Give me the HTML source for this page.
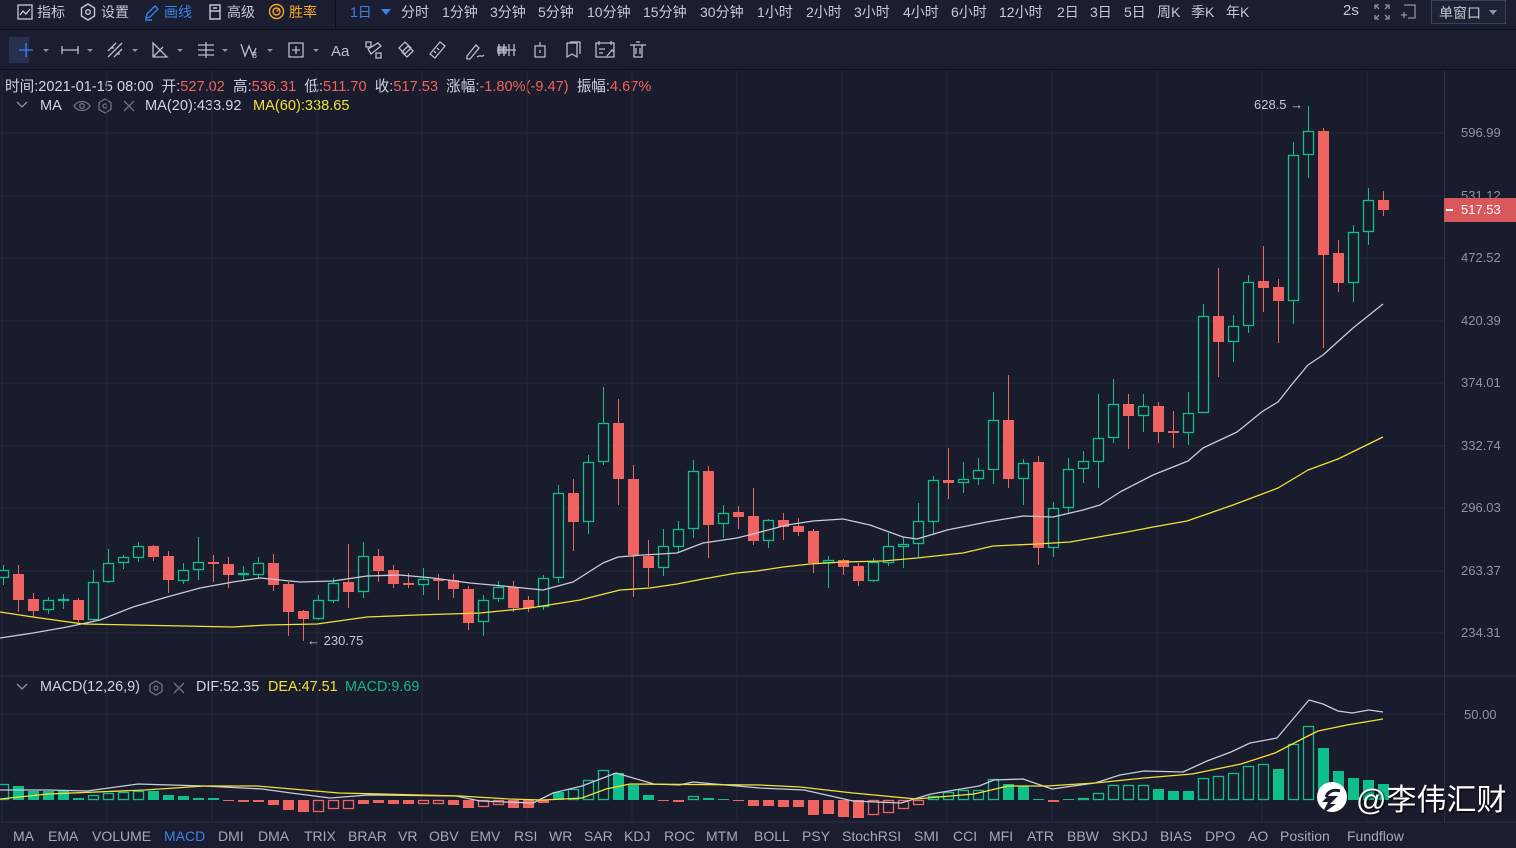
<!DOCTYPE html>
<html><head><meta charset="utf-8">
<style>
*{margin:0;padding:0;box-sizing:border-box}
body{width:1516px;height:848px;overflow:hidden;background:#191c2d;font-family:"Liberation Sans","Noto Sans CJK SC",sans-serif;color:#c5c9d6;position:relative}
.a{position:absolute;white-space:nowrap}
.top{font-size:14px;top:2px;color:#c5c9d6}
.tab{font-size:14px;top:828px;color:#a3a8bb}
.ax{font-size:13px;color:#8d92a6;left:1461px}
</style></head><body>
<div class="a" style="left:0;top:0;width:1516px;height:30px;background:#1b1e30;border-bottom:1px solid #0e1019"></div>
<div class="a" style="left:0;top:31px;width:1516px;height:39px;background:#1b1e30;border-bottom:1px solid #0e1019"></div>
<div class="a" style="left:335px;top:0;width:1px;height:30px;background:#0e1019"></div>

<!-- top bar -->
<svg class="a" style="left:17px;top:4px" width="16" height="16" viewBox="0 0 16 16" fill="none" stroke="#c5c9d6" stroke-width="1.3"><rect x="1" y="1" width="14" height="14"/><path d="M3 11l3-4 3 3 4-5"/></svg>
<span class="a top" style="left:37px">指标</span>
<svg class="a" style="left:80px;top:3px" width="16" height="18" viewBox="0 0 16 18" fill="none" stroke="#c5c9d6" stroke-width="1.4"><path d="M8 1l6.5 4v8L8 17 1.5 13V5z"/><circle cx="8" cy="9" r="2.3"/></svg>
<span class="a top" style="left:101px">设置</span>
<svg class="a" style="left:144px;top:3px" width="16" height="18" viewBox="0 0 16 18" fill="none" stroke="#3d82e6" stroke-width="1.4"><path d="M2 15l1-4 8-8 3 3-8 8zM1 17h7"/></svg>
<span class="a top" style="left:164px;color:#3d82e6">画线</span>
<svg class="a" style="left:207px;top:4px" width="16" height="16" viewBox="0 0 16 16" fill="none" stroke="#c5c9d6" stroke-width="1.4"><path d="M3 1h10v14H3zM3 7h10M6 4h4"/></svg>
<span class="a top" style="left:227px">高级</span>
<svg class="a" style="left:268px;top:3px" width="17" height="17" viewBox="0 0 17 17" fill="none" stroke="#f5a623" stroke-width="1.4"><circle cx="8.5" cy="8.5" r="7"/><circle cx="8.5" cy="8.5" r="3.5"/><path d="M8.5 8.5l3-3"/></svg>
<span class="a top" style="left:289px;color:#f5a623">胜率</span>
<span class="a top" style="left:350px;color:#3d82e6">1日</span>
<div class="a" style="left:381px;top:9px;border:5px solid transparent;border-top:6px solid #3d82e6"></div>
<span class="a top" style="left:401px">分时</span>
<span class="a top" style="left:442px">1分钟</span>
<span class="a top" style="left:490px">3分钟</span>
<span class="a top" style="left:538px">5分钟</span>
<span class="a top" style="left:587px">10分钟</span>
<span class="a top" style="left:643px">15分钟</span>
<span class="a top" style="left:700px">30分钟</span>
<span class="a top" style="left:757px">1小时</span>
<span class="a top" style="left:806px">2小时</span>
<span class="a top" style="left:854px">3小时</span>
<span class="a top" style="left:903px">4小时</span>
<span class="a top" style="left:951px">6小时</span>
<span class="a top" style="left:999px">12小时</span>
<span class="a top" style="left:1057px">2日</span>
<span class="a top" style="left:1090px">3日</span>
<span class="a top" style="left:1124px">5日</span>
<span class="a top" style="left:1157px">周K</span>
<span class="a top" style="left:1191px">季K</span>
<span class="a top" style="left:1226px">年K</span>
<span class="a top" style="left:1343px;font-size:15px">2s</span>
<svg class="a" style="left:1374px;top:4px" width="16" height="16" viewBox="0 0 16 16" fill="none" stroke="#8d92a6" stroke-width="1.3"><path d="M1 5V1h4M11 1h4v4M15 11v4h-4M5 15H1v-4M2 2l3 3M14 2l-3 3M14 14l-3-3M2 14l3-3"/></svg>
<svg class="a" style="left:1400px;top:3px" width="17" height="17" viewBox="0 0 17 17" fill="none" stroke="#8d92a6" stroke-width="1.3"><path d="M4 2h11v13H8M1 12h6M4 9v6"/></svg>
<div class="a" style="left:1431px;top:0;width:75px;height:24px;border:1px solid #3a4060;background:#1e2235"></div>
<span class="a top" style="left:1439px;top:3px">单窗口</span>
<div class="a" style="left:1489px;top:10px;border:4px solid transparent;border-top:5px solid #8d92a6"></div>

<!-- tool row -->
<div class="a" style="left:9px;top:37px;width:20px;height:26px;background:#283050"></div>
<svg class="a" style="left:0;top:36px" width="660" height="28" viewBox="0 0 660 28" fill="none" stroke="#b9bdcc" stroke-width="1.3">
<path d="M19 14h14M26 7v14" stroke="#3d82e6"/>
<path d="M43 13l3 3 3-3z" fill="#8d92a6" stroke="none"/>
<path d="M62 14h16M62 10v8M78 10v8"/><path d="M87 13l3 3 3-3z" fill="#8d92a6" stroke="none"/>
<path d="M108 21l14-14M108 15l8-8M114 21l8-8M110 12h4M116 18h4"/><path d="M132 13l3 3 3-3z" fill="#8d92a6" stroke="none"/>
<path d="M153 7v14h14zM153 21l10-10"/><path d="M177 13l3 3 3-3z" fill="#8d92a6" stroke="none"/>
<path d="M198 9h16M198 14h16M198 19h16M206 6v16"/><path d="M222 13l3 3 3-3z" fill="#8d92a6" stroke="none"/>
<path d="M241 8l4 12 4-10 4 10 3-8"/><text x="252" y="22" font-size="9" fill="#b9bdcc" stroke="none" font-family="Liberation Sans">3</text><path d="M267 13l3 3 3-3z" fill="#8d92a6" stroke="none"/>
<path d="M289 7h14v14h-14zM296 10v8M292 14h8"/><path d="M313 13l3 3 3-3z" fill="#8d92a6" stroke="none"/>
<text x="331" y="20" font-size="15" fill="#b9bdcc" stroke="none" font-family="Liberation Sans">Aa</text>
<path d="M366 6h5v5h-5zM376 17h5v5h-5zM368 13l10-6 3 3-10 8z"/>
<path d="M399 12l6-6 6 6-6 6zM402 16l6-6 5 5-6 6z"/>
<path d="M430 18l10-12 5 4-10 12zM434 15l2 2M437 12l2 2"/>
<path d="M467 20l9-11 3 3-9 11h-3zM477 21c3-3 5 1 7-2"/>
<path d="M499 8v12M504 8v12M509 8v12M514 8v12M497 14h19M498 11h3v6h-3zM503 11h3v6h-3z"/>
<path d="M535 10h10v11h-10zM540 6v4M540 14v3"/>
<path d="M567 7h10v14l-5-3-5 3zM570 6h10v12"/>
<path d="M596 7h18v14h-18zM599 5v4M611 5v4M599 13h6M599 17h4M607 20l5-6 2 2"/>
<path d="M630 9h16M634 9v12h8V9M636 6h4M636 12v6M640 12v6"/>
</svg>

<!-- info lines -->
<div class="a" style="left:5px;top:75px;font-size:14.6px;color:#d0d3de">时间:2021-01-15 08:00&nbsp; 开:<span style="color:#f0605c">527.02</span>&nbsp; 高:<span style="color:#f0605c">536.31</span>&nbsp; 低:<span style="color:#f0605c">511.70</span>&nbsp; 收:<span style="color:#f0605c">517.53</span>&nbsp; 涨幅:<span style="color:#f0605c">-1.80%(-9.47)</span>&nbsp; 振幅:<span style="color:#f0605c">4.67%</span></div>
<svg class="a" style="left:16px;top:100px" width="12" height="10" viewBox="0 0 12 10" fill="none" stroke="#8d92a6" stroke-width="1.3"><path d="M1 2l5 5 5-5"/></svg>
<span class="a" style="left:40px;top:98px;font-size:14.6px;color:#d0d3de">MA</span>
<svg class="a" style="left:73px;top:98px" width="65" height="16" viewBox="0 0 65 16" fill="none" stroke="#6e7388" stroke-width="1.3"><path d="M1 8c4-6 12-6 16 0-4 6-12 6-16 0z"/><circle cx="9" cy="8" r="2.3"/><path d="M32 1l6 3.5v7L32 15l-6-3.5v-7z"/><circle cx="32" cy="8" r="2"/><path d="M51 3l10 10M61 3L51 13"/></svg>
<span class="a" style="left:145px;top:98px;font-size:14.6px;color:#d0d3de">MA(20):433.92</span>
<span class="a" style="left:253px;top:98px;font-size:14.6px;color:#f2e234">MA(60):338.65</span>

<!-- chart svg -->
<svg id="ch" class="a" style="left:0;top:0" width="1516" height="848"></svg>

<!-- axis labels -->
<span class="a ax" style="top:125px">596.99</span>
<span class="a ax" style="top:188px">531.12</span>
<span class="a ax" style="top:250px">472.52</span>
<span class="a ax" style="top:313px">420.39</span>
<span class="a ax" style="top:375px">374.01</span>
<span class="a ax" style="top:438px">332.74</span>
<span class="a ax" style="top:500px">296.03</span>
<span class="a ax" style="top:563px">263.37</span>
<span class="a ax" style="top:625px">234.31</span>
<div class="a" style="left:1444px;top:198px;width:72px;height:24px;background:#d8575a"></div>
<div class="a" style="left:1446px;top:209px;width:7px;height:1.5px;background:#fff"></div>
<span class="a" style="left:1461px;top:202px;font-size:13px;color:#fff">517.53</span>
<span class="a" style="left:1254px;top:97px;font-size:13px;color:#c5c9d6">628.5 →</span>
<span class="a" style="left:307px;top:633px;font-size:13px;color:#c5c9d6">← 230.75</span>
<span class="a ax" style="top:707px;left:1464px">50.00</span>

<!-- MACD header -->
<svg class="a" style="left:16px;top:682px" width="12" height="10" viewBox="0 0 12 10" fill="none" stroke="#8d92a6" stroke-width="1.3"><path d="M1 2l5 5 5-5"/></svg>
<span class="a" style="left:40px;top:679px;font-size:14.4px;color:#d0d3de">MACD(12,26,9)</span>
<svg class="a" style="left:147px;top:680px" width="40" height="16" viewBox="0 0 40 16" fill="none" stroke="#6e7388" stroke-width="1.3"><path d="M9 1l6 3.5v7L9 15l-6-3.5v-7z"/><circle cx="9" cy="8" r="2"/><path d="M27 3l10 10M37 3L27 13"/></svg>
<span class="a" style="left:196px;top:679px;font-size:14.4px;color:#d0d3de">DIF:52.35</span>
<span class="a" style="left:268px;top:679px;font-size:14.4px;color:#f2e234">DEA:47.51</span>
<span class="a" style="left:345px;top:679px;font-size:14.4px;color:#12b886">MACD:9.69</span>

<!-- tabs -->
<span class="a tab" style="left:13px">MA</span>
<span class="a tab" style="left:48px">EMA</span>
<span class="a tab" style="left:92px">VOLUME</span>
<span class="a tab" style="left:164px;color:#3d82e6">MACD</span>
<span class="a tab" style="left:218px">DMI</span>
<span class="a tab" style="left:258px">DMA</span>
<span class="a tab" style="left:304px">TRIX</span>
<span class="a tab" style="left:348px">BRAR</span>
<span class="a tab" style="left:398px">VR</span>
<span class="a tab" style="left:429px">OBV</span>
<span class="a tab" style="left:470px">EMV</span>
<span class="a tab" style="left:514px">RSI</span>
<span class="a tab" style="left:549px">WR</span>
<span class="a tab" style="left:584px">SAR</span>
<span class="a tab" style="left:624px">KDJ</span>
<span class="a tab" style="left:664px">ROC</span>
<span class="a tab" style="left:706px">MTM</span>
<span class="a tab" style="left:754px">BOLL</span>
<span class="a tab" style="left:802px">PSY</span>
<span class="a tab" style="left:842px">StochRSI</span>
<span class="a tab" style="left:914px">SMI</span>
<span class="a tab" style="left:953px">CCI</span>
<span class="a tab" style="left:989px">MFI</span>
<span class="a tab" style="left:1027px">ATR</span>
<span class="a tab" style="left:1067px">BBW</span>
<span class="a tab" style="left:1112px">SKDJ</span>
<span class="a tab" style="left:1160px">BIAS</span>
<span class="a tab" style="left:1205px">DPO</span>
<span class="a tab" style="left:1248px">AO</span>
<span class="a tab" style="left:1280px">Position</span>
<span class="a tab" style="left:1347px">Fundflow</span>

<!-- watermark -->
<svg class="a" style="left:1314px;top:780px" width="36" height="36" viewBox="0 0 36 36"><circle cx="18" cy="17" r="15" fill="#fff"/><path d="M8 34l6-12h-6l6-6h10l-8 8h6z" fill="#191c2d"/><path d="M12 17c2-6 8-8 14-6" stroke="#191c2d" stroke-width="3" fill="none"/></svg>
<span class="a" style="left:1356px;top:775px;font-size:30px;color:#fff;text-shadow:1px 1px 2px #000">@李伟汇财</span>

<script>
var s='';
var gc='#232738';
[133,196,258,321,383,446,508,571,633,714].forEach(function(y){s+='<line x1="0" y1="'+y+'" x2="1444" y2="'+y+'" stroke="'+gc+'"/>';});
for(var x=2;x<1444;x+=105){s+='<line x1="'+x+'" y1="71" x2="'+x+'" y2="822" stroke="'+gc+'"/>';}
s+='<line x1="0" y1="676" x2="1516" y2="676" stroke="#2d3145"/>';
s+='<line x1="0" y1="822" x2="1516" y2="822" stroke="#2d3145"/>';
s+='<line x1="1444.5" y1="71" x2="1444.5" y2="822" stroke="#2d3145"/>';
s+='<rect x="0" y="823" width="1516" height="25" fill="#1b1e30"/>';
var d=[[578,570,565,585],[574,600,565,612],[599,611,593,617],[610,600,597,614],[601,599,594,609],[600,620,598,625],[620,582,570,622],[582,563,549,583],[563,557,555,569],[558,546,542,562],[546,557,545,561],[556,580,551,593],[581,570,563,584],[570,562,537,580],[562,564,555,582],[564,575,557,588],[575,573,566,580],[575,563,557,578],[563,585,554,591],[584,612,582,636],[611,619,610,641],[619,600,595,620],[601,583,578,603],[582,592,544,608],[592,556,542,598],[556,571,549,582],[570,584,565,588],[583,585,573,588],[585,579,568,595],[579,581,574,600],[580,589,574,598],[589,623,586,630],[622,600,595,636],[599,587,581,602],[587,608,581,612],[600,608,596,612],[607,578,575,610],[578,493,485,583],[493,522,479,551],[522,462,455,534],[462,423,387,465],[423,479,399,505],[479,555,465,597],[556,568,540,587],[568,546,529,576],[547,529,521,553],[529,471,460,538],[471,525,466,558],[524,513,505,538],[512,517,506,529],[516,541,488,545],[541,520,519,548],[520,527,513,540],[526,532,518,536],[531,563,529,573],[563,560,556,588],[560,567,559,575],[566,581,563,586],[581,562,558,582],[563,546,533,566],[547,544,537,568],[544,521,503,557],[522,480,476,535],[480,483,448,499],[483,479,462,493],[479,470,458,485],[470,420,392,484],[420,479,375,488],[479,463,459,505],[462,548,456,565],[548,508,502,557],[508,469,458,513],[469,461,451,483],[462,438,394,488],[438,404,379,443],[404,416,394,449],[416,406,394,432],[406,432,402,443],[431,433,411,448],[433,413,392,445],[413,316,304,413],[316,342,268,377],[342,326,315,362],[326,282,275,333],[281,288,246,312],[287,301,279,343],[301,155,142,324],[155,131,106,178],[131,255,128,348],[253,283,240,292],[283,232,225,302],[232,200,188,245],[200,210,191,216]];
var G='#0fbf8a',R='#ef6461';
function pl(p,c,w){return '<polyline points="'+p+'" fill="none" stroke="'+c+'" stroke-width="'+(w||1.3)+'" stroke-linejoin="round"/>';}
d.forEach(function(c,i){var x=3+15*i,up=c[1]<c[0],col=up?G:R,t=Math.min(c[0],c[1]),b=Math.max(c[0],c[1]);
s+='<line x1="'+(x+.5)+'" y1="'+c[2]+'" x2="'+(x+.5)+'" y2="'+c[3]+'" stroke="'+col+'"/>';
if(b-t<2){s+='<rect x="'+(x-5)+'" y="'+t+'" width="11" height="2" fill="'+col+'"/>';}
else if(up){s+='<rect x="'+(x-4.5)+'" y="'+(t+.5)+'" width="10" height="'+(b-t-1)+'" fill="#191c2d" stroke="'+col+'" stroke-width="1.3"/>';}
else{s+='<rect x="'+(x-5)+'" y="'+t+'" width="11" height="'+(b-t)+'" fill="'+col+'"/>';}
});
s+=pl('0,638 33,633 67,627 100,620 133,607 167,597 200,588 233,582 260,578 300,582 333,581 367,576 400,575 433,578 470,583 503,586 543,590 573,582 603,563 618,557 643,555 677,553 703,543 737,538 753,534 787,525 813,521 843,519 870,525 903,537 917,539 947,530 987,522 1023,516 1053,517 1083,510 1100,505 1120,492 1153,475 1188,461 1203,448 1237,432 1263,411 1278,402 1293,383 1308,365 1323,355 1353,328 1383,304','#c9cbd8');
s+=pl('0,612 33,617 83,624 133,625 233,627 267,625 317,624 367,617 417,615 480,613 530,608 580,600 620,590 650,588 677,584 703,579 737,573 757,571 783,567 810,564 843,562 883,561 917,558 963,553 993,546 1037,544 1070,542 1127,532 1153,527 1187,521 1233,505 1278,488 1308,470 1338,459 1383,437','#f2e234');
var h=[[16,1],[14,0],[9,0],[9,0],[9,0],[2,0],[5,1],[7,1],[8,1],[9,1],[9,0],[5,0],[4,0],[2,0],[2,0],[-1,0],[-2,0],[-2,0],[-5,0],[-10,0],[-12,0],[-12,1],[-9,1],[-9,1],[-4,0],[-3,0],[-4,0],[-4,0],[-4,1],[-4,1],[-5,0],[-8,0],[-7,1],[-5,1],[-8,0],[-8,0],[-3,0],[8,0],[11,1],[20,1],[30,1],[27,0],[15,0],[5,0],[-1,0],[-2,0],[4,1],[2,0],[1,0],[-1,0],[-6,0],[-6,0],[-7,0],[-7,0],[-15,0],[-14,0],[-17,0],[-18,0],[-15,1],[-13,1],[-9,1],[-5,1],[4,1],[8,1],[10,1],[10,1],[21,1],[16,0],[14,0],[1,0],[-2,0],[1,0],[2,1],[7,1],[15,1],[15,1],[15,1],[11,0],[9,0],[9,0],[22,1],[24,1],[27,1],[34,1],[36,1],[31,0],[56,1],[74,1],[52,0],[29,0],[22,0],[20,0],[16,0]];
h.forEach(function(v,i){var x=3+15*i,col=v[0]>=0?G:R,t=v[0]>=0?800-v[0]:800,hh=Math.max(1,Math.abs(v[0]));
if(v[1])s+='<rect x="'+(x-4.5)+'" y="'+(t+.5)+'" width="10" height="'+Math.max(1,hh-1)+'" fill="none" stroke="'+col+'" stroke-width="1.3"/>';
else s+='<rect x="'+(x-5)+'" y="'+t+'" width="11" height="'+hh+'" fill="'+col+'"/>';});
s+=pl('0,790 48,790 87,791 138,784 204,786 262,789 291,793 330,798 368,795 456,796 480,801 533,803 553,793 582,786 616,773 654,784 679,785 693,782 737,786 760,788 804,790 853,801 901,803 931,794 979,786 994,780 1023,779 1052,789 1095,783 1120,775 1144,771 1183,772 1207,761 1231,752 1250,743 1277,738 1309,700 1323,704 1338,711 1352,713 1369,710 1383,712','#c9cbd8');
s+=pl('0,799 48,794 145,790 204,786 257,786 339,793 460,796 509,799 543,800 582,798 606,789 630,784 760,785 800,787 853,793 916,799 974,794 1008,786 1047,786 1095,783 1144,778 1192,774 1241,764 1275,753 1304,738 1318,731 1347,725 1383,719','#f2e234');
document.getElementById('ch').innerHTML=s;
</script>
</body></html>
